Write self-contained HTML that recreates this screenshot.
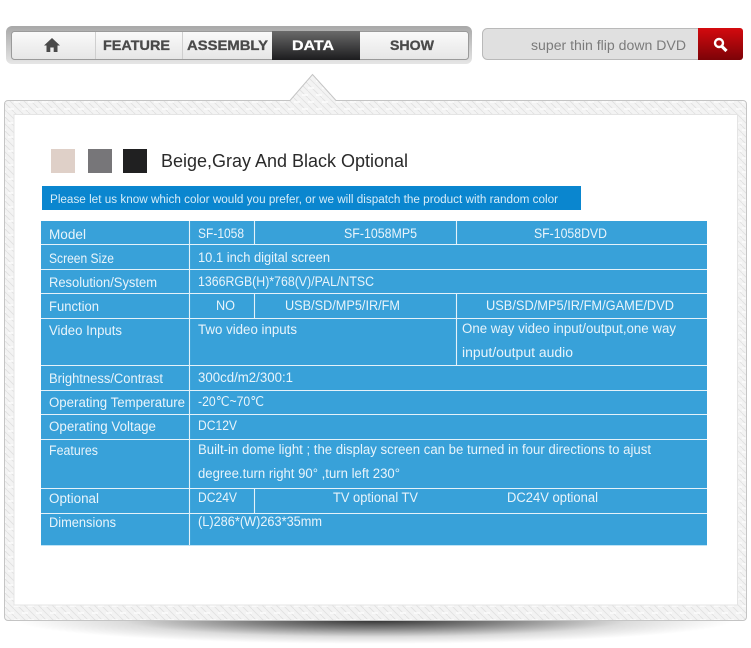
<!DOCTYPE html>
<html>
<head>
<meta charset="utf-8">
<style>
html,body{margin:0;padding:0;background:#fff;width:751px;height:648px;overflow:hidden}
svg{display:block}
text{font-family:"Liberation Sans",sans-serif}
.t{font-size:13.500px;fill:#e8f4fb}
.n{font-size:14px;font-weight:bold;fill:#4a4a4a;stroke:#4a4a4a;stroke-width:.3}
</style>
</head>
<body>
<svg width="751" height="648" viewBox="0 0 751 648" xmlns="http://www.w3.org/2000/svg">
<defs>
<linearGradient id="navOuter" x1="0" y1="0" x2="0" y2="1"><stop offset="0" stop-color="#a8a8a8"/><stop offset="1" stop-color="#e6e6e6"/></linearGradient>
<linearGradient id="navIn" x1="0" y1="0" x2="0" y2="1"><stop offset="0" stop-color="#fafafa"/><stop offset="1" stop-color="#e6e6e6"/></linearGradient>
<linearGradient id="dark" x1="0" y1="0" x2="0" y2="1"><stop offset="0" stop-color="#6a6a6a"/><stop offset="1" stop-color="#1c1c1e"/></linearGradient>
<linearGradient id="red" x1="0" y1="0" x2="0" y2="1"><stop offset="0" stop-color="#d40a0e"/><stop offset="1" stop-color="#7c0308"/></linearGradient>
<pattern id="tex" width="14" height="14" patternUnits="userSpaceOnUse">
<rect width="14" height="14" fill="#f3f3f3"/>
<path d="M0 0L14 14M7 0L14 7M0 7L7 14" stroke="#e0e0e0" stroke-width=".8"/>
<path d="M0 4H6M8 11H14" stroke="#fcfcfc" stroke-width="1.500"/>
</pattern>
<radialGradient id="sh" cx=".5" cy="0" r="1" gradientTransform="translate(.5 0) scale(.5 1) translate(-.5 0)">
<stop offset="0" stop-color="#000" stop-opacity=".82"/>
<stop offset=".35" stop-color="#000" stop-opacity=".5"/>
<stop offset=".7" stop-color="#000" stop-opacity=".14"/>
<stop offset="1" stop-color="#000" stop-opacity="0"/>
</radialGradient>
</defs>

<rect x="15" y="620" width="720" height="24" fill="url(#sh)"/>

<!-- nav -->
<rect x="6" y="26" width="466" height="38" rx="6" fill="url(#navOuter)"/>
<rect x="11.500" y="31.500" width="457" height="28" rx="3" fill="url(#navIn)" stroke="#9a9a9a"/>
<path d="M95.500 32V59M182.500 32V59" stroke="#cfcfcf"/>
<rect x="272" y="31" width="88" height="29" fill="url(#dark)"/>
<path d="M52 38L44 45.500H46.500V52H50.300V47.500H53.700V52H57.500V45.500H60Z" fill="#4a4a4a"/>
<text class="n" x="103" y="50" textLength="67" lengthAdjust="spacingAndGlyphs">FEATURE</text>
<text class="n" x="187" y="50" textLength="81" lengthAdjust="spacingAndGlyphs">ASSEMBLY</text>
<text class="n" x="292" y="50" textLength="42" lengthAdjust="spacingAndGlyphs" style="fill:#fff;stroke:#fff">DATA</text>
<text class="n" x="390" y="50" textLength="44" lengthAdjust="spacingAndGlyphs">SHOW</text>

<!-- search -->
<rect x="482.500" y="28.500" width="260" height="31" rx="5" fill="#e0e0e0" stroke="#b9b9b9"/>
<path d="M698 28H740a3 3 0 0 1 3 3V57a3 3 0 0 1-3 3H698Z" fill="url(#red)"/>
<circle cx="719" cy="43" r="4" fill="none" stroke="#fff" stroke-width="2.400"/>
<path d="M722 46.500L726.500 51" stroke="#fff" stroke-width="3.200"/>
<text x="531" y="50" font-size="13.500" fill="#7b7b7b" textLength="155" lengthAdjust="spacingAndGlyphs">super thin flip down DVD</text>

<!-- frame -->
<path d="M8 100.500H290L312.500 74.500L336 100.500H743a3.500 3.500 0 0 1 3.500 3.500V617a3.500 3.500 0 0 1-3.500 3.500H8a3.500 3.500 0 0 1-3.500-3.500V104a3.500 3.500 0 0 1 3.500-3.500Z" fill="url(#tex)" stroke="#c4c4c4"/>
<rect x="14" y="114.500" width="723.500" height="490.500" fill="#fff" stroke="#e4e4e4"/>

<!-- swatches -->
<rect x="51" y="149" width="24" height="24" fill="#dfd0c8"/>
<rect x="88" y="149" width="24" height="24" fill="#777679"/>
<rect x="123" y="149" width="24" height="24" fill="#202021"/>
<text x="161" y="167" font-size="18" fill="#2a2a2a" textLength="247" lengthAdjust="spacingAndGlyphs">Beige,Gray And Black Optional</text>

<rect x="42" y="186" width="539" height="24" fill="#0a86cf"/>
<text x="50" y="203" font-size="11.500" fill="#d7ecf8" textLength="508" lengthAdjust="spacingAndGlyphs">Please let us know which color would you prefer, or we will  dispatch the product with random color</text>

<!-- table -->
<rect x="41" y="221" width="666" height="324" fill="#38a1d9"/>
<path d="M41 244.500H707M41 269.500H707M41 293.500H707M41 318.500H707M41 365.500H707M41 390.500H707M41 414.500H707M41 439.500H707M41 488.500H707M41 513.500H707" stroke="#e4f2fa" stroke-width="1.100"/>
<path d="M189.500 221V545M254.500 221V244M254.500 293V318M254.500 488V513M456.500 221V244M456.500 293V365" stroke="#e4f2fa" stroke-width="1.100"/>
<path d="M41 545.500H707" stroke="#bfe3f6"/>

<g lengthAdjust="spacingAndGlyphs">
<text class="t" lengthAdjust="spacingAndGlyphs" x="49" y="239" textLength="37">Model</text>
<text class="t" lengthAdjust="spacingAndGlyphs" x="49" y="263" textLength="65">Screen Size</text>
<text class="t" lengthAdjust="spacingAndGlyphs" x="49" y="287" textLength="108">Resolution/System</text>
<text class="t" lengthAdjust="spacingAndGlyphs" x="49" y="311" textLength="50">Function</text>
<text class="t" lengthAdjust="spacingAndGlyphs" x="49" y="335" textLength="73">Video Inputs</text>
<text class="t" lengthAdjust="spacingAndGlyphs" x="49" y="383" textLength="114">Brightness/Contrast</text>
<text class="t" lengthAdjust="spacingAndGlyphs" x="49" y="407" textLength="136">Operating Temperature</text>
<text class="t" lengthAdjust="spacingAndGlyphs" x="49" y="431" textLength="107">Operating Voltage</text>
<text class="t" lengthAdjust="spacingAndGlyphs" x="49" y="455" textLength="49">Features</text>
<text class="t" lengthAdjust="spacingAndGlyphs" x="49" y="503" textLength="50">Optional</text>
<text class="t" lengthAdjust="spacingAndGlyphs" x="49" y="527" textLength="67">Dimensions</text>

<text class="t" lengthAdjust="spacingAndGlyphs" x="198" y="238" textLength="46">SF-1058</text>
<text class="t" lengthAdjust="spacingAndGlyphs" x="344" y="238" textLength="73">SF-1058MP5</text>
<text class="t" lengthAdjust="spacingAndGlyphs" x="534" y="238" textLength="73">SF-1058DVD</text>
<text class="t" lengthAdjust="spacingAndGlyphs" x="198" y="262" textLength="132">10.1 inch digital screen</text>
<text class="t" lengthAdjust="spacingAndGlyphs" x="198" y="286" textLength="176">1366RGB(H)*768(V)/PAL/NTSC</text>
<text class="t" lengthAdjust="spacingAndGlyphs" x="216" y="310" textLength="19">NO</text>
<text class="t" lengthAdjust="spacingAndGlyphs" x="285" y="310" textLength="115">USB/SD/MP5/IR/FM</text>
<text class="t" lengthAdjust="spacingAndGlyphs" x="486" y="310" textLength="188">USB/SD/MP5/IR/FM/GAME/DVD</text>
<text class="t" lengthAdjust="spacingAndGlyphs" x="198" y="334" textLength="99">Two video inputs</text>
<text class="t" lengthAdjust="spacingAndGlyphs" x="462" y="333" textLength="214">One way video input/output,one way</text>
<text class="t" lengthAdjust="spacingAndGlyphs" x="462" y="357" textLength="111">input/output audio</text>
<text class="t" lengthAdjust="spacingAndGlyphs" x="198" y="382" textLength="95">300cd/m2/300:1</text>
<text class="t" lengthAdjust="spacingAndGlyphs" x="198" y="406" textLength="66">-20℃~70℃</text>
<text class="t" lengthAdjust="spacingAndGlyphs" x="198" y="430" textLength="39">DC12V</text>
<text class="t" lengthAdjust="spacingAndGlyphs" x="198" y="454" textLength="453">Built-in dome light ; the display screen can be turned in four directions to ajust</text>
<text class="t" lengthAdjust="spacingAndGlyphs" x="198" y="478" textLength="202">degree.turn right 90° ,turn left 230°</text>
<text class="t" lengthAdjust="spacingAndGlyphs" x="198" y="502" textLength="39">DC24V</text>
<text class="t" lengthAdjust="spacingAndGlyphs" x="333" y="502" textLength="85">TV optional TV</text>
<text class="t" lengthAdjust="spacingAndGlyphs" x="507" y="502" textLength="91">DC24V optional</text>
<text class="t" lengthAdjust="spacingAndGlyphs" x="198" y="526" textLength="124">(L)286*(W)263*35mm</text>
</g>
</svg>
</body>
</html>
